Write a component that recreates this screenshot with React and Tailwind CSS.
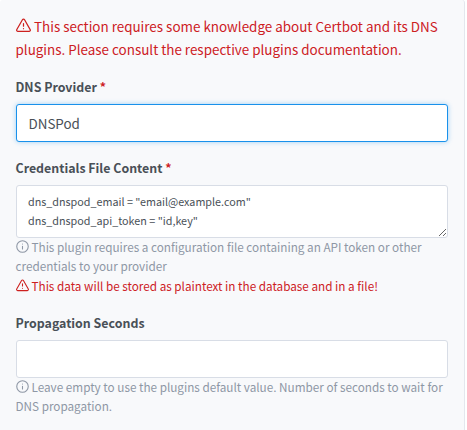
function AlertIcon({ className }) {
  return (
    <svg viewBox="0 0 24 24" fill="none" stroke="currentColor" strokeWidth="2" strokeLinecap="round" strokeLinejoin="round" className={className}>
      <path d="M10.29 2.86L1.32 18.5a2 2 0 0 0 1.71 3h17.94a2 2 0 0 0 1.71-3L13.71 2.86a2 2 0 0 0-3.42 0z" />
      <path d="M12 9v4M12 17v.01" />
    </svg>
  );
}

function InfoIcon({ className }) {
  return (
    <svg viewBox="0 0 24 24" fill="none" stroke="currentColor" strokeWidth="2" strokeLinecap="round" strokeLinejoin="round" className={className}>
      <circle cx="12" cy="12" r="10.6" />
      <path d="M12 16.5v-5M12 7.5v.01" />
    </svg>
  );
}

function Label({ children, required }) {
  return (
    <label className="block h-[21px] text-[12.4px] leading-[21px] font-bold whitespace-nowrap text-[#495057]">
      {children}
      {required && <span className="text-[#cd201f]"> *</span>}
    </label>
  );
}

function Line({ icon, children }) {
  return (
    <div className="flex items-center whitespace-nowrap">
      {icon}
      <span>{children}</span>
    </div>
  );
}

export default function App() {
  return (
    <div className="h-[430px] w-[467px] overflow-hidden bg-white font-['Noto_Sans_CJK_SC',sans-serif] text-[#495057]">
      <div className="h-full w-[465px] rounded-t-[3px] border-r border-[#e3e7ed] bg-[#f8f9fb] pt-[15px] pr-4 pl-[15.5px]">
        <div className="text-[13.43px] leading-[22.5px] text-[#cd201f]">
          <Line icon={<AlertIcon className="mr-[3.5px] mb-px h-[15px] w-[15px]" />}>This section requires some knowledge about Certbot and its DNS</Line>
          <Line>plugins. Please consult the respective plugins documentation.</Line>
        </div>

        <div className="mt-[17px]">
          <Label required>DNS Provider</Label>
          <div className="mt-[6px] flex h-[38px] w-[432px] items-center rounded-[3px] border border-[#1991eb] bg-white px-3 text-[13.4px] shadow-[0_0_5px_rgba(25,145,235,0.4)]">
            DNSPod
          </div>
        </div>

        <div className="mt-4">
          <Label required>Credentials File Content</Label>
          <textarea
            readOnly
            className="mt-[6px] block h-[53px] w-[432px] resize overflow-hidden rounded-[3px] border border-[#d8dde6] bg-white px-[11.5px] pt-[6px] text-[10.78px] leading-[19px] outline-none"
            value={'dns_dnspod_email = "email@example.com"\ndns_dnspod_api_token = "id,key"'}
          />
          <div className="-mt-px text-[11.73px] leading-[19px] text-[#8e97a5]">
            <Line icon={<InfoIcon className="mr-[3px] mb-px h-[13px] w-[13px]" />}>This plugin requires a configuration file containing an API token or other</Line>
            <Line>credentials to your provider</Line>
            <div className="mt-px text-[#cd201f]">
              <Line icon={<AlertIcon className="mr-[3px] mb-px h-[13px] w-[13px]" />}>This data will be stored as plaintext in the database and in a file!</Line>
            </div>
          </div>
        </div>

        <div className="mt-[17.5px]">
          <Label>Propagation Seconds</Label>
          <div className="mt-[6px] h-[38px] w-[432px] rounded-[3px] border border-[#d8dde6] bg-white" />
          <div className="-mt-px text-[11.73px] leading-[19px] text-[#8e97a5]">
            <Line icon={<InfoIcon className="mr-[3px] h-[13px] w-[13px]" />}>Leave empty to use the plugins default value. Number of seconds to wait for</Line>
            <Line>DNS propagation.</Line>
          </div>
        </div>
      </div>
    </div>
  );
}
